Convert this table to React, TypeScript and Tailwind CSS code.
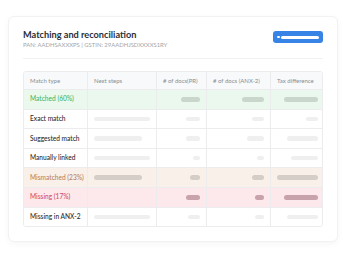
import React from "react";

type Row = {
  label: string;
  bg: string;
  text: string;
  next?: number;
  nextColor: string;
  pill: string;
  pr: number;
  anx: number;
  tax: number;
};

const rows: Row[] = [
  { label: "Matched (60%)", bg: "bg-[#ebf8ee]", text: "text-[#3fb96a]", nextColor: "", pill: "bg-[#c9d6cc]", pr: 19, anx: 22, tax: 34 },
  { label: "Exact match", bg: "bg-white", text: "text-[#2b2b2b]", next: 56, nextColor: "bg-[#efefef]", pill: "bg-[#efefef]", pr: 14, anx: 12, tax: 12 },
  { label: "Suggested match", bg: "bg-white", text: "text-[#2b2b2b]", next: 48, nextColor: "bg-[#efefef]", pill: "bg-[#efefef]", pr: 14, anx: 17, tax: 31 },
  { label: "Manually linked", bg: "bg-white", text: "text-[#2b2b2b]", next: 56, nextColor: "bg-[#efefef]", pill: "bg-[#efefef]", pr: 7, anx: 7, tax: 27 },
  { label: "Mismatched (23%)", bg: "bg-[#f9f0ea]", text: "text-[#b8845f]", next: 48, nextColor: "bg-[#d5cdc8]", pill: "bg-[#d5cdc8]", pr: 10, anx: 12, tax: 42 },
  { label: "Missing (17%)", bg: "bg-[#fde9ec]", text: "text-[#d24d6b]", nextColor: "", pill: "bg-[#c9a3ac]", pr: 14, anx: 9, tax: 34 },
  { label: "Missing in ANX-2", bg: "bg-white", text: "text-[#2b2b2b]", next: 56, nextColor: "bg-[#efefef]", pill: "bg-[#efefef]", pr: 12, anx: 9, tax: 31 },
];

const cols = "grid grid-cols-[63px_69px_50px_64px_54px]";

const Pill = ({ w, color }: { w: number; color: string }) => (
  <span className={`block h-[4.5px] rounded-full ${color}`} style={{ width: w }} />
);

const App = () => {
  return (
    <div className="w-[350px] h-[263px] bg-white pt-[16px] pl-[8px] font-['Lato',sans-serif]">
      <div className="w-[330px] h-[226px] rounded-[6px] bg-white border border-[#f2f2f2] shadow-[0_2px_6px_rgba(0,0,0,0.04)] px-[14px] pt-[12px]">
        <div className="flex justify-between items-start">
          <div>
            <h2 className="text-[9.2px] leading-[12px] font-bold text-[#2a2f38]">Matching and reconciliation</h2>
            <p className="text-[5.9px] leading-[8px] text-[#a3a6ab]">PAN: AADHSAXXXPS | GSTIN: 29AADHJSDXXXXS1RY</p>
          </div>
          <div className="mt-[2px] w-[50px] h-[12px] rounded-[3px] bg-[#3784e6] flex items-center gap-[1.5px] px-[4px]">
            <span className="w-[2.5px] h-[2.5px] rounded-full bg-white" />
            <span className="flex-1 h-[3px] rounded-full bg-white" />
          </div>
        </div>
        <div className="h-px bg-[#f1f1f3] mt-[9px] mb-[12px]" />
        <div className="border border-[#ececee] rounded-[3px] overflow-hidden">
          <div className={`${cols} h-[17px] bg-[#f8f9fa] text-[6px] text-[#8a8d92]`}>
            {["Match type", "Next steps", "# of docs(PR)", "# of docs (ANX-2)", "Tax difference"].map((h, i) => (
              <div key={h} className={`flex items-center px-[6px] whitespace-nowrap ${i > 0 ? "border-l border-[#ececee]" : ""}`}>
                {h}
              </div>
            ))}
          </div>
          {rows.map((r) => (
            <div key={r.label} className={`${cols} h-[19.6px] border-t border-[#ececee] ${r.bg}`}>
              <div className={`flex items-center px-[6px] text-[6.6px] font-medium whitespace-nowrap ${r.text}`}>{r.label}</div>
              <div className="flex items-center px-[6px] border-l border-[#ececee]">
                {r.next && <Pill w={r.next} color={r.nextColor} />}
              </div>
              <div className="flex items-center justify-end px-[6px] border-l border-[#ececee]">
                <Pill w={r.pr} color={r.pill} />
              </div>
              <div className="flex items-center justify-end px-[6px] border-l border-[#ececee]">
                <Pill w={r.anx} color={r.pill} />
              </div>
              <div className="flex items-center justify-end px-[6px] border-l border-[#ececee]">
                <Pill w={r.tax} color={r.pill} />
              </div>
            </div>
          ))}
        </div>
      </div>
    </div>
  );
};

export default App;
